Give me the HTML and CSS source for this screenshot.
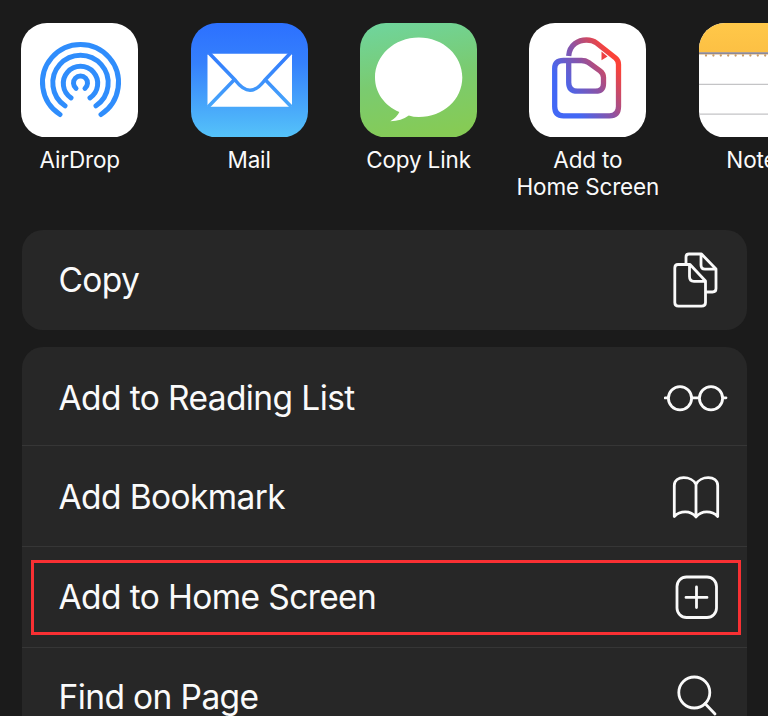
FILE: index.html
```html
<!DOCTYPE html>
<html lang="en">
<head>
<meta charset="utf-8">
<title>Share</title>
<link rel="stylesheet" href="styles.css">
</head>
<body>
<main class="sheet">
  <nav class="apps">
    <div class="app">
      <svg class="tile" viewBox="21 22.5 117 114.5" fill="none">
        <rect x="21" y="22.5" width="117" height="114.5" rx="26" fill="#fff"/>
        <g stroke="#2f8dfc" stroke-width="5" stroke-linecap="round">
          <path d="M60 114A38 38 0 1 1 101 114"/>
          <path d="M65 105.3A27.7 27.7 0 1 1 96 105.3"/>
          <path d="M71 97.3A17.2 17.2 0 1 1 90 97.3"/>
          <path d="M76 87.8A7 7 0 1 1 85 87.8"/>
        </g>
      </svg>
      <span class="name">AirDrop</span>
    </div>
    <div class="app">
      <svg class="tile" viewBox="190.5 22.5 117 114.5" fill="none">
        <defs><linearGradient id="mail" gradientUnits="userSpaceOnUse" x1="0" y1="22" x2="0" y2="137"><stop offset="0" stop-color="#2c70ff"/><stop offset=".35" stop-color="#3580fc"/><stop offset="1" stop-color="#55c3f9"/></linearGradient></defs>
        <rect x="190.5" y="22.5" width="117" height="114.5" rx="26" fill="url(#mail)"/>
        <rect x="207" y="53.3" width="84.5" height="53" rx="1.5" fill="#fff"/>
        <path d="M208.5 52.5L235 80C245 93 254 93 264 80L290 52.5M233.5 79.5L207.5 106.5M265 79.5L291 106.5" stroke="url(#mail)" stroke-width="3.5"/>
      </svg>
      <span class="name">Mail</span>
    </div>
    <div class="app">
      <svg class="tile" viewBox="359.7 22.5 117 114.5">
        <defs><linearGradient id="chat" x1=".3" y1="0" x2=".5" y2="1"><stop offset="0" stop-color="#70d49a"/><stop offset=".5" stop-color="#7acb70"/><stop offset="1" stop-color="#86cb55"/></linearGradient></defs>
        <rect x="359.7" y="22.5" width="117" height="114.5" rx="26" fill="url(#chat)"/>
        <path fill="#fff" d="M418.5 37C443 37 462 55 462 77S443 116.500 418.500 116.500Q413 116.500 408.500 115Q401 120.500 390 120.700Q397 116.500 399 111.500C384 105 374.700 92 374.700 77C374.700 55 394 37 418.500 37Z"/>
      </svg>
      <span class="name">Copy Link</span>
    </div>
    <div class="app">
      <svg class="tile" viewBox="529.5 22.5 117 114.5" fill="none">
        <defs><linearGradient id="home" gradientUnits="userSpaceOnUse" x1="563" y1="88" x2="614" y2="58"><stop offset="0" stop-color="#4268f5"/><stop offset=".5" stop-color="#8b53a5"/><stop offset="1" stop-color="#fb4238"/></linearGradient></defs>
        <rect x="529.5" y="22.500" width="117" height="114.500" rx="26" fill="#fff"/>
        <path stroke="url(#home)" stroke-width="5.300" d="M569.200 55.500C570 44 579 39.500 587 39.500Q593 39.500 597 42.500L616 57.500Q619 60 619 64V106Q619 115.300 610 115.300H564Q555.200 115.300 555.200 106V68Q555.200 60 564 60H582Q586 60 589 62L600.500 70.300Q604 73 604 77V83Q604 90.700 596 90.700H578Q569.200 90.700 569.200 82V62"/>
        <path fill="#ee4043" d="M602 51L608 56L602 59.700Z"/>
      </svg>
      <span class="name">Add to<br>Home Screen</span>
    </div>
    <div class="app">
      <svg class="tile" viewBox="698.5 22.5 117 114.5" fill="none">
        <defs>
          <clipPath id="page"><rect x="698.5" y="22.5" width="117" height="114.5" rx="26"/></clipPath>
          <linearGradient id="band" x1="0" y1="0" x2="0" y2="1"><stop offset="0" stop-color="#ffc849"/><stop offset="1" stop-color="#fcc044"/></linearGradient>
        </defs>
        <g clip-path="url(#page)">
          <path fill="#fff" d="M698 22h118v116h-118z"/>
          <path fill="url(#band)" d="M698 22h118v30h-118z"/>
          <path stroke="#8c8999" stroke-width="1.800" d="M698 52.600h118"/>
          <path stroke="#e9d3b5" d="M698 54h118"/>
          <path stroke="#c99c68" stroke-width="2.300" stroke-linecap="round" stroke-dasharray="0 7.400" d="M705.500 55h110"/>
          <path stroke="#c4c4c6" stroke-width="1.300" d="M698 83.800h118M698 113.600h118"/>
        </g>
      </svg>
      <span class="name">Notes</span>
    </div>
  </nav>

  <section class="card">
    <div class="row">
      <span>Copy</span>
      <svg class="icon" viewBox="664 248 64 64">
        <path d="M686 264V257Q686 254 689 254H701.500L716 269V288.500Q716 292 712.500 292H707M701 254.500V265Q701 269.200 705 269.200H715.500"/>
        <path d="M678 264.500H690L705.500 281V302.500Q705.500 306.200 701.500 306.200H678.500Q674.800 306.200 674.800 302.500V268Q674.800 264.500 678 264.500ZM689.500 265V276.500Q689.500 281.300 694 281.300H705"/>
      </svg>
    </div>
  </section>

  <section class="card list">
    <div class="row">
      <span>Add to Reading List</span>
      <svg class="icon" viewBox="664 365 64 64"><circle cx="680" cy="397.300" r="11.600"/><circle cx="711" cy="397.300" r="11.600"/><path d="M665.200 396.800h3M692 396.800h7M723 396.800h3"/></svg>
    </div>
    <div class="row">
      <span>Add Bookmark</span>
      <svg class="icon" viewBox="664 465 64 64"><path d="M696 484.500C692 475.500 674.300 475 674.300 485.500V516.500C680 510.500 690.500 510 696 517C701.500 510 712 510.500 717.700 516.500V485.500C717.700 475 700 475.500 696 484.500ZM696 484.500V517"/></svg>
    </div>
    <div class="row marked">
      <span>Add to Home Screen</span>
      <svg class="icon" viewBox="664 565 64 64"><rect x="677" y="577" width="39.500" height="40.500" rx="9.500"/><path d="M686 597.400h21M696.500 587v20.500"/></svg>
    </div>
    <div class="row">
      <span>Find on Page</span>
      <svg class="icon" viewBox="664 665 64 64"><circle cx="694.300" cy="692.500" r="15.500"/><path d="M705 703.500L715 714"/></svg>
    </div>
  </section>
</main>
</body>
</html>
```
FILE: styles.css
```css
* { box-sizing: border-box; }
body {
  margin: 0;
  background: #1b1b1b;
  color: #fafafa;
  font-family: Inter, "Liberation Sans", sans-serif;
}
.sheet {
  height: 716px;
  overflow: hidden;
  padding: 22.5px 21px 0 22px;
}
.apps {
  display: flex;
  height: 207px;
  margin-left: -27px;
}
.app {
  flex: 0 0 169.4px;
  display: flex;
  flex-direction: column;
  align-items: center;
}
.tile {
  display: block;
  width: 117px;
  height: 114.5px;
}
.name {
  margin-top: 9px;
  font-size: 22.5px;
  line-height: 27px;
  letter-spacing: -0.15px;
  text-align: center;
  white-space: nowrap;
}
.card {
  background: #272727;
  border-radius: 21px;
  overflow: hidden;
}
.list {
  margin-top: 17px;
  height: 420px;
}
.row {
  position: relative;
  display: flex;
  align-items: center;
  justify-content: space-between;
  height: 101px;
  padding: 0 19px 0 36.5px;
  font-size: 33.5px;
  line-height: 42px;
  letter-spacing: -0.6px;
}
.row:only-child { height: 100.5px; }
.row + .row { border-top: 1px solid #363636; }
.list .row:nth-child(1) { height: 98px; padding-top: 3px; }
.list .row:nth-child(2) { padding-top: 2px; }
.list .row:nth-child(4) { height: 99px; }
.icon {
  flex: none;
  width: 64px;
  height: 64px;
  fill: none;
  stroke: #fafafa;
  stroke-width: 2.8;
  stroke-linecap: round;
  stroke-linejoin: round;
}
.marked::after {
  content: "";
  position: absolute;
  inset: 13px 6px 12px 9px;
  border: 3.5px solid #f83033;
}
```
